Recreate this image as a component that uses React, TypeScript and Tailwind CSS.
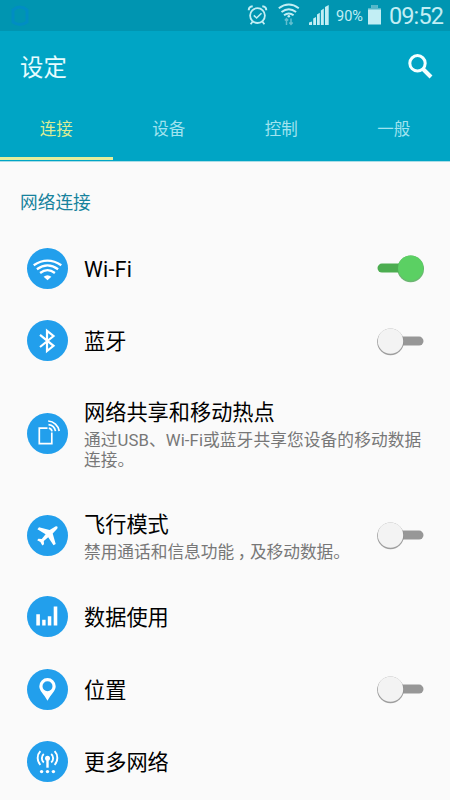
import type { ReactNode } from "react";
import clsx from "clsx";

type TSetting = {
  id: string;
  title: string;
  description?: ReactNode;
  height: string;
  icon: ReactNode;
  enabled?: boolean;
};

const tabs = ["连接", "设备", "控制", "一般"];

function WifiIcon() {
  return (
    <g fill="none" stroke="#fff" strokeWidth="2.3">
      <path d="M6.7 17.3Q20.5 7.9 34.3 17.3" />
      <path d="M9.9 21.2Q20.5 13.7 31.1 21.2" />
      <path d="M13.1 25Q20.5 19.3 27.9 25" />
      <path d="M16.6 28.7Q20.5 25.6 24.4 28.7L20.5 32.2Z" fill="#fff" stroke="none" />
    </g>
  );
}

function BluetoothIcon() {
  return <path d="M13 14.8L26.5 25.8L20 31V10.8L26.5 16L13 27" fill="none" stroke="#fff" strokeWidth="2.2" />;
}

function HotspotIcon() {
  return (
    <g fill="none" stroke="#fff" strokeWidth="1.7">
      <path d="M20.5 15.2H12.3V30.7H24.8V19.5" />
      <path d="M21.8 15.2A4 4 0 0 1 25 18.4" />
      <path d="M21.5 11.6A8 8 0 0 1 28.5 18.2" />
      <path d="M21.2 8A12 12 0 0 1 32.2 18" />
    </g>
  );
}

function AirplaneIcon() {
  return (
    <path
      d="M27.2 12.2C29 10.6 31.6 11 30.2 13.8L25.7 18.4L28.7 28.9L26.5 30.3L21.2 22.3L16.8 26L17 29.2L15.3 30.6L13.4 27.1L10.2 25.3L11.4 23.8L14.8 24.1L18.6 19.2L10.4 14.2L12 12.2L22.6 15Z"
      fill="#fff"
    />
  );
}

function DataIcon() {
  return <path d="M9.3 18.3h3.6v11.3H9.3zM15.2 23.8h3.4v5.8h-3.4zM20.8 20.2h3.5v9.4h-3.5zM26.7 10.6h3.6v19h-3.6z" fill="#fff" />;
}

function LocationIcon() {
  return (
    <path
      fillRule="evenodd"
      d="M20.5 9A8.2 8.2 0 0 0 12.3 17.2C12.3 22 17 25 20.5 31.7C24 25 28.7 22 28.7 17.2A8.2 8.2 0 0 0 20.5 9ZM20.5 12.2A5 5 0 1 1 20.5 22.2A5 5 0 0 1 20.5 12.2Z"
      fill="#fff"
    />
  );
}

function MoreNetworksIcon() {
  return (
    <g fill="#fff">
      <circle cx="20.5" cy="17.2" r="2.5" />
      <path d="M19.3 18h2.4v8.7h-2.4z" />
      <g fill="none" stroke="#fff" strokeWidth="1.9">
        <path d="M16.8 13A5.5 5.5 0 0 0 16.8 21.4M24.2 13A5.5 5.5 0 0 1 24.2 21.4" />
        <path d="M13.4 10.2A9.8 9.8 0 0 0 13.4 23.8M27.6 10.2A9.8 9.8 0 0 1 27.6 23.8" />
      </g>
      <circle cx="14.6" cy="30.6" r="1.7" />
      <circle cx="20.5" cy="30.6" r="1.7" />
      <circle cx="26.4" cy="30.6" r="1.7" />
    </g>
  );
}

const settings: TSetting[] = [
  { id: "wifi", title: "Wi-Fi", height: "h-[72.5px]", icon: <WifiIcon />, enabled: true },
  { id: "bluetooth", title: "蓝牙", height: "h-[72.5px]", icon: <BluetoothIcon />, enabled: false },
  {
    id: "hotspot",
    title: "网络共享和移动热点",
    description: "通过USB、Wi-Fi或蓝牙共享您设备的移动数据连接。",
    height: "h-[112.5px]",
    icon: <HotspotIcon />,
  },
  {
    id: "airplane",
    title: "飞行模式",
    description: (
      <>
        禁用通话和信息功能<span className="pl-[3.5px] tracking-[-4.5px]">，</span>及移动数据。
      </>
    ),
    height: "h-[91px]",
    icon: <AirplaneIcon />,
    enabled: false,
  },
  { id: "data", title: "数据使用", height: "h-[72.5px]", icon: <DataIcon /> },
  { id: "location", title: "位置", height: "h-[72.5px]", icon: <LocationIcon />, enabled: false },
  { id: "more", title: "更多网络", height: "h-[72.5px]", icon: <MoreNetworksIcon /> },
];

function Toggle({ on }: { on: boolean }) {
  return (
    <svg width="50" height="32" viewBox="0 0 50 32" className="shrink-0" role="switch" aria-checked={on}>
      <rect x="2.5" y="11.6" width="46" height="9" rx="4.5" fill={on ? "#4cad50" : "#979797"} />
      <circle cx={on ? 35.7 : 15.5} cy="16.9" r="13.3" fill={on ? "#54a85a" : "#8d8d8d"} opacity="0.85" />
      <circle cx={on ? 35.7 : 15.5} cy="16.1" r="12.7" fill={on ? "#5bd063" : "#f3f3f3"} />
    </svg>
  );
}

function StatusBar() {
  return (
    <div className="flex h-[31px] items-center bg-[#0095b1] pr-[5px] text-[#c2eef4]">
      <svg width="40" height="31" viewBox="0 0 40 31">
        <path d="M13 10Q20 4 27 10V22Q20 27 13 22Z" fill="none" stroke="#0089cf" strokeWidth="3" opacity="0.6" />
      </svg>
      <div className="flex-1" />
      <svg width="92" height="31" viewBox="240 0 92 31" fill="none" stroke="currentColor">
        <circle cx="257.5" cy="15.6" r="7.4" strokeWidth="1.8" />
        <path d="M253.8 15.3L256.6 18L261.5 13.2" strokeWidth="1.6" />
        <path d="M248.8 10.2Q248.6 6.8 252.7 6.3M266.2 10.2Q266.4 6.8 262.3 6.3" strokeWidth="2" />
        <path d="M252.7 21.5L250.6 24.3M262.3 21.5L264.4 24.3" strokeWidth="1.8" />
        <path d="M278.8 8.2Q288.8 1 298.8 8.2M281.5 12Q288.8 6.5 296.1 12M284 15.3Q288.8 11.8 293.6 15.3" strokeWidth="2" />
        <circle cx="288.8" cy="16.2" r="1.3" fill="currentColor" stroke="none" />
        <path d="M286.5 25V19M284.8 20.5L286.5 18.7L288.2 20.5M291 18.5V24M289.3 22.5L291 24.4L292.7 22.5" stroke="#62bfd0" strokeWidth="1.5" />
        <path d="M309 25V22.4L312 21.5V25ZM313.2 25V18.5L316 17V25ZM317 25V14.5L319.8 12.8V25ZM320.9 25V10.4L323.8 8.5V25ZM325 25V7L328.7 5V25Z" fill="currentColor" stroke="none" />
      </svg>
      <span className="w-[35px] pl-[4px] pt-[3px] text-[14.5px] leading-none">90%</span>
      <svg width="18" height="31" viewBox="0 0 18 31">
        <path d="M4.5 5H10.5V8H14V24.6H1V8H4.5Z" fill="currentColor" />
        <path d="M4.5 5H10.5V8H14V9.5H1V8H4.5Z" fill="#55b7c9" />
      </svg>
      <span className="w-[60px] pl-[4px] pt-[2px] text-[23.5px] leading-none tracking-[-0.9px]">09:52</span>
    </div>
  );
}

function SettingRow({ setting }: { setting: TSetting }) {
  return (
    <li className={clsx("flex items-center pr-[25px] pl-[26.5px]", setting.height)}>
      <svg width="41" height="41" viewBox="0 0 41 41" className="shrink-0">
        <circle cx="20.5" cy="20.5" r="20.5" fill="#229fec" />
        {setting.icon}
      </svg>
      <div className="ml-[16.5px] flex-1">
        <h3
          className={clsx(
            "text-[21.2px] leading-[28px] text-black",
            !setting.description && "pt-[3px]",
            setting.id === "wifi" && "tracking-[0.3px]"
          )}
        >
          {setting.title}
        </h3>
        {setting.description && (
          <p
            className={clsx(
              "-mr-[60px] mt-[3.5px] -mb-[3.5px] w-[345px] text-[16.7px] leading-[20px] text-[#777]",
              setting.id === "hotspot" && "tracking-[0.1px]"
            )}
          >
            {setting.description}
          </p>
        )}
      </div>
      {setting.enabled !== undefined && <Toggle on={setting.enabled} />}
    </li>
  );
}

export default function App() {
  return (
    <div
      lang="zh-CN"
      className="h-[800px] w-[450px] overflow-hidden bg-[#fafafa] font-[Roboto,'Noto_Sans_CJK_SC',sans-serif]"
    >
      <StatusBar />
      <header className="flex h-[131px] flex-col border-b border-[#a9dde6] bg-[#00a5c5] pb-px">
        <div className="flex h-[71px] items-center justify-between pr-[16px] pl-[20px]">
          <h1 className="pt-[4px] text-[23.4px] leading-none text-[#e8fcff]">设定</h1>
          <svg width="28" height="28" viewBox="0 1 28 28" fill="none" stroke="#f4ffff">
            <circle cx="11.5" cy="11.3" r="7.7" strokeWidth="3" />
            <path d="M17 17L25 25" strokeWidth="4" />
          </svg>
        </div>
        <nav className="grid flex-1 grid-cols-4">
          {tabs.map((tab, i) => (
            <button
              key={tab}
              className={clsx(
                "flex items-center justify-center border-b-[3px] pt-[1px] text-[16.5px] leading-none",
                i === 0 ? "border-[#e4ee9d] text-[#dcec94]" : "border-transparent text-[#a0e3ef]"
              )}
            >
              {tab}
            </button>
          ))}
        </nav>
      </header>
      <h2 className="flex h-[70px] items-center pt-[14px] pl-[20px] text-[17.7px] leading-none text-[#16829d]">网络连接</h2>
      <ul>
        {settings.map((setting) => (
          <SettingRow key={setting.id} setting={setting} />
        ))}
      </ul>
    </div>
  );
}
